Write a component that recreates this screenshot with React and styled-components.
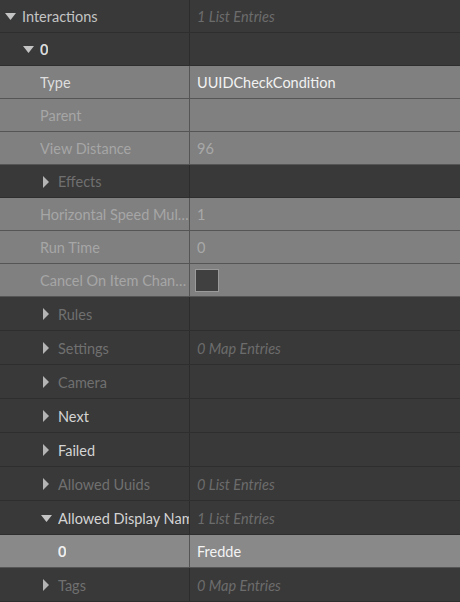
import React from "react";
import styled, { createGlobalStyle } from "styled-components";

const GlobalStyle = createGlobalStyle`
  html, body {
    margin: 0;
    padding: 0;
    background: #393939;
  }
  body {
    font-family: "Lato", "Noto Sans", sans-serif;
    font-size: 14.5px;
  }
`;

const Tree = styled.div`
  width: 460px;
  display: flex;
  flex-direction: column;
`;

const Row = styled.div`
  display: grid;
  grid-template-columns: 189px 1px 1fr;
  height: ${props => props.h}px;
  box-sizing: border-box;
  padding-top: 1px;
  background: ${props =>
    props.tone === "gray" ? "#808080" : props.tone === "light" ? "#898989" : "#393939"};
  border-bottom: 1px solid ${props => (props.tone === "dark" ? "#2e2e2e" : "#555555")};
`;

const Divider = styled.div`
  margin-top: -1px;
  background: ${props => (props.tone === "dark" ? "#2c2c2c" : "#555555")};
`;

const Label = styled.div`
  display: flex;
  align-items: center;
  min-width: 0;
  padding-left: ${props => props.indent}px;
  overflow: hidden;
  white-space: nowrap;
`;

const Arrow = styled.span`
  flex: 0 0 18px;
  display: flex;
  align-items: center;
  padding-left: ${props => (props.open ? 1 : 3)}px;
  box-sizing: border-box;
`;

const Name = styled.span`
  color: ${props => props.color};
  font-weight: ${props => (props.bold ? 700 : 400)};
  overflow: hidden;
  text-overflow: ${props => (props.clip ? "clip" : "ellipsis")};
  white-space: nowrap;
  min-width: 0;
`;

const Value = styled.div`
  display: flex;
  align-items: center;
  padding-left: 7px;
  color: ${props => props.color || "#a8a8a8"};
  font-style: ${props => (props.italic ? "italic" : "normal")};
  white-space: nowrap;
  overflow: hidden;
`;

const Check = styled.div`
  width: 22px;
  height: 21px;
  margin-left: -2px;
  background: #404040;
  border: 1px solid #9a9a9a;
`;

const DownIcon = () => (
  <svg width="11" height="7" viewBox="0 0 11 7">
    <path d="M0 0 L11 0 L5.5 7 Z" fill="#c4c4c4" />
  </svg>
);

const RightIcon = () => (
  <svg width="6" height="12" viewBox="0 0 6 12">
    <path d="M0 0 L6 6 L0 12 Z" fill="#b4b4b4" />
  </svg>
);

const rows = [
  { level: 0, group: "open", name: "Interactions", color: "#c4c4c4", value: "1 List Entries", italic: true, tone: "dark", h: 33 },
  { level: 1, group: "open", name: "0", bold: true, color: "#dcdcdc", tone: "dark", h: 33 },
  { level: 2, name: "Type", color: "#dedede", value: "UUIDCheckCondition", valueColor: "#f2f2f2", tone: "gray", h: 33 },
  { level: 2, name: "Parent", color: "#a6a6a6", tone: "gray", h: 33 },
  { level: 2, name: "View Distance", color: "#a6a6a6", value: "96", tone: "gray", h: 33 },
  { level: 2, group: "closed", name: "Effects", color: "#707070", tone: "dark", h: 33 },
  { level: 2, name: "Horizontal Speed Multiplier", color: "#a6a6a6", value: "1", tone: "gray", h: 33 },
  { level: 2, name: "Run Time", color: "#a6a6a6", value: "0", tone: "gray", h: 33 },
  { level: 2, name: "Cancel On Item Change", color: "#a6a6a6", check: true, tone: "gray", h: 33 },
  { level: 2, group: "closed", name: "Rules", color: "#707070", tone: "dark", h: 34 },
  { level: 2, group: "closed", name: "Settings", color: "#707070", value: "0 Map Entries", italic: true, tone: "dark", h: 34 },
  { level: 2, group: "closed", name: "Camera", color: "#707070", tone: "dark", h: 34 },
  { level: 2, group: "closed", name: "Next", color: "#d4d4d4", tone: "dark", h: 34 },
  { level: 2, group: "closed", name: "Failed", color: "#d4d4d4", tone: "dark", h: 34 },
  { level: 2, group: "closed", name: "Allowed Uuids", color: "#707070", value: "0 List Entries", italic: true, tone: "dark", h: 34 },
  { level: 2, group: "open", name: "Allowed Display Names", color: "#d4d4d4", value: "1 List Entries", italic: true, tone: "dark", h: 34 },
  { level: 3, name: "0", bold: true, color: "#f0f0f0", value: "Fredde", valueColor: "#f4f4f4", tone: "light", h: 33 },
  { level: 2, group: "closed", name: "Tags", color: "#707070", value: "0 Map Entries", italic: true, tone: "dark", h: 34 }
];

const TreeRow = ({ row }) => (
  <Row tone={row.tone} h={row.h}>
    <Label indent={row.group ? 18 * row.level + 4 : 18 * (row.level - 1) + 22}>
      {row.group && (
        <Arrow open={row.group === "open"}>
          {row.group === "open" ? <DownIcon /> : <RightIcon />}
        </Arrow>
      )}
      <Name color={row.color} bold={row.bold} clip={!!row.group}>
        {row.name}
      </Name>
    </Label>
    <Divider tone={row.tone} />
    <Value italic={row.italic} color={row.italic ? "#6c6c6c" : row.valueColor}>
      {row.check ? <Check /> : row.value}
    </Value>
  </Row>
);

const App = () => (
  <>
    <GlobalStyle />
    <Tree>
      {rows.map((row, i) => (
        <TreeRow key={i} row={row} />
      ))}
    </Tree>
  </>
);

export default App;
